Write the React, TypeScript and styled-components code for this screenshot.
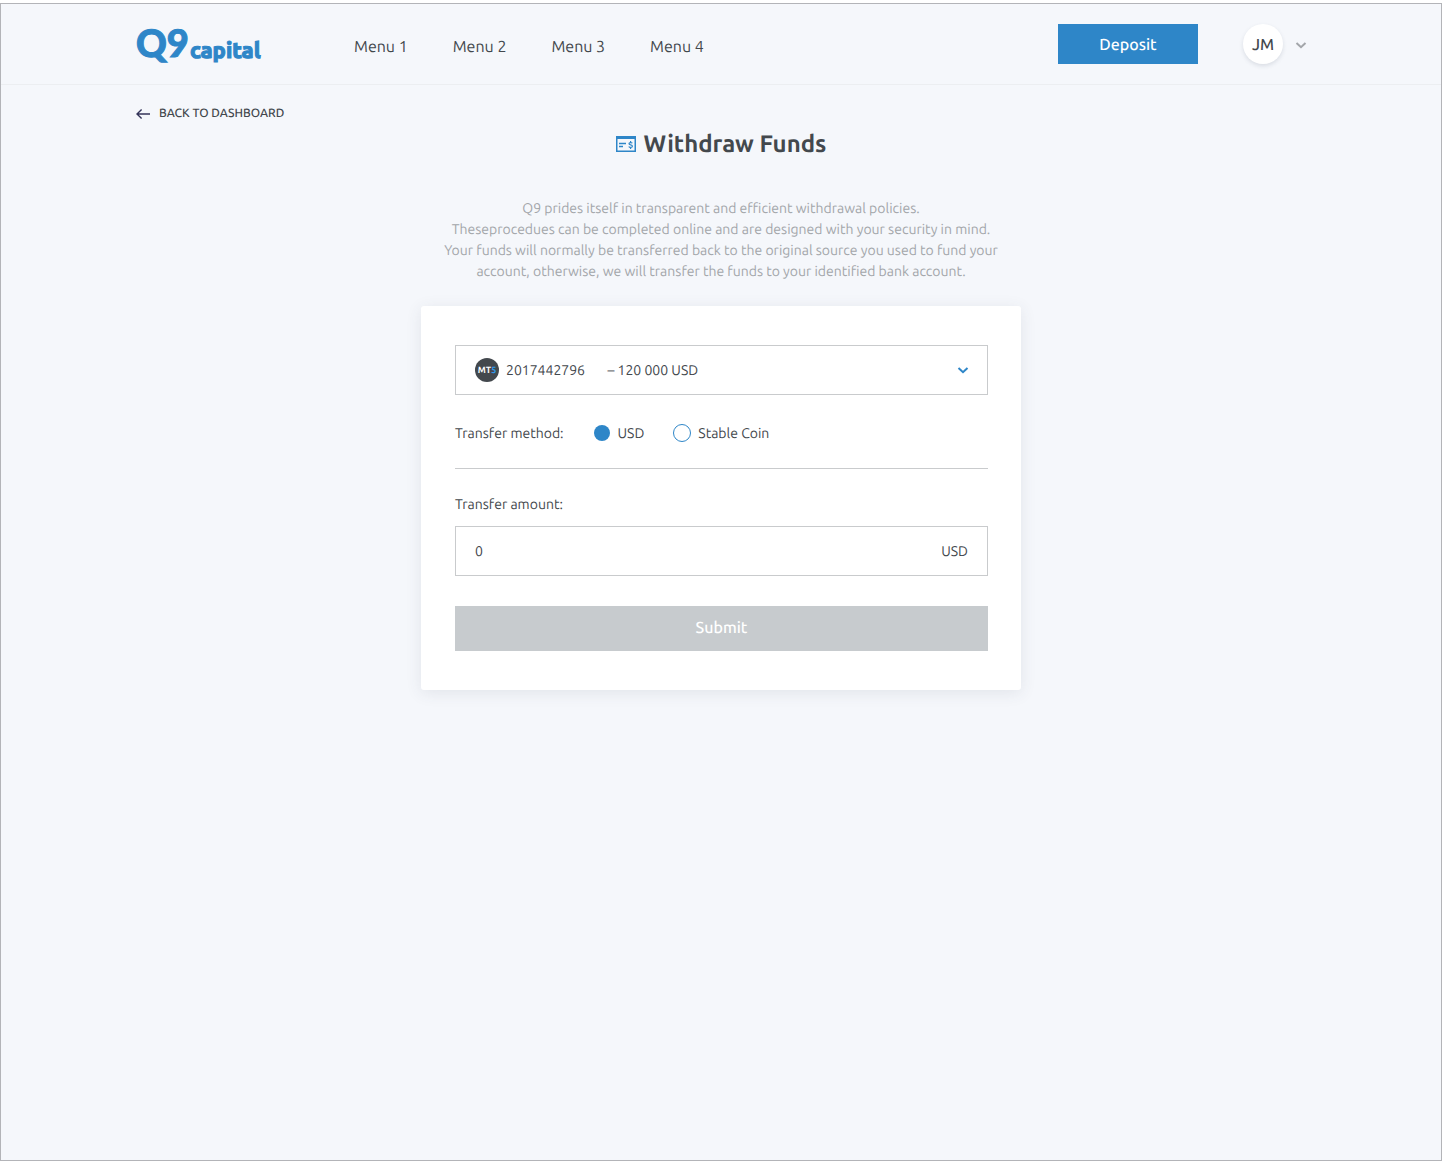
import React, { useState } from 'react';
import styled, { createGlobalStyle } from 'styled-components';

const color = {
  page: '#f5f7fb',
  ink: '#43484d',
  muted: '#a3a6aa',
  line: '#c9cbcd',
  blue: '#2e86c8',
  disabled: '#c7cbce',
};

const GlobalStyle = createGlobalStyle`
  *, *::before, *::after { box-sizing: border-box; }
  body { margin: 0; background: #fff; }
  body, button, input, select {
    font-family: Ubuntu, "Noto Sans", "Open Sans", sans-serif;
    font-size: 14px;
    color: ${color.ink};
    text-rendering: geometricPrecision;
    -webkit-font-smoothing: antialiased;
  }
  h1, p, fieldset { margin: 0; padding: 0; border: 0; }
`;

const Page = styled.div`
  min-height: calc(100vh - 3px);
  margin: 3px 3px 0 0;
  border: 1px solid #b3b4b8;
  background: ${color.page};
`;

const Container = styled.div`
  max-width: 1172px;
  margin: 0 auto;
`;

const Header = styled.header`
  border-bottom: 1px solid #eceef1;
`;

const HeaderRow = styled(Container)`
  display: flex;
  align-items: center;
  height: 80px;
`;

const Logo = styled.a`
  display: flex;
  width: 219px;
`;

const Nav = styled.nav`
  display: flex;
  gap: 45px;
  padding-top: 6px;
`;

const NavLink = styled.a`
  font-size: 16px;
  line-height: 24px;
  color: ${color.ink};
  text-decoration: none;
`;

const DepositButton = styled.button`
  width: 140px;
  height: 40px;
  margin-left: auto;
  padding: 2px 0 0;
  border: 0;
  background: ${color.blue};
  color: #fff;
  font-size: 16px;
  font-weight: 500;
`;

const AccountButton = styled.button`
  display: flex;
  align-items: center;
  gap: 12px;
  margin-left: 45px;
  padding: 0;
  border: 0;
  background: none;
  color: ${color.muted};
`;

const Avatar = styled.span`
  display: grid;
  place-items: center;
  width: 40px;
  height: 40px;
  padding-top: 2px;
  border-radius: 50%;
  background: #fff;
  box-shadow: 0 2px 4px rgba(60, 70, 90, 0.14);
  color: ${color.ink};
  font-size: 16px;
  font-weight: 500;
`;

const Main = styled.main`
  padding: 19px 0 40px;
`;

const BackLink = styled.a`
  display: inline-flex;
  align-items: center;
  gap: 9px;
  font-size: 12px;
  font-weight: 500;
  line-height: 20px;
  color: ${color.ink};
  text-decoration: none;
  text-transform: uppercase;
  vertical-align: top;
`;

const Column = styled.section`
  max-width: 600px;
  margin: 2px auto 0;
`;

const Title = styled.h1`
  display: flex;
  align-items: center;
  justify-content: center;
  gap: 8px;
  font-size: 24px;
  font-weight: 700;
  line-height: 36px;
`;

const Intro = styled.p`
  margin: 36px 0 24px;
  color: ${color.muted};
  line-height: 21px;
  text-align: center;
`;

const Card = styled.form`
  display: flex;
  flex-direction: column;
  padding: 39px 33px 39px 34px;
  border-radius: 3px;
  background: #fff;
  box-shadow: 0 3px 16px rgba(60, 70, 90, 0.1);
`;

const AccountField = styled.div`
  display: grid;
  align-items: center;

  > * { grid-area: 1 / 1; }
  > svg { pointer-events: none; }
  > svg:last-child { justify-self: end; margin-right: 19px; }
`;

const AccountSelect = styled.select`
  width: 100%;
  height: 50px;
  padding: 0 50px;
  border: 1px solid ${color.line};
  border-radius: 0;
  background: #fff;
  appearance: none;
`;

const Badge = styled.span`
  z-index: 1;
  width: 24px;
  margin-left: 20px;
  border-radius: 50%;
  background: ${color.ink};
  color: #fff;
  font-size: 9px;
  font-weight: 700;
  line-height: 24px;
  text-align: center;
  pointer-events: none;

  em { color: #2f9cf0; font-style: normal; }
`;

const Methods = styled.fieldset`
  display: flex;
  align-items: center;
  gap: 29px;
  padding: 26px 0 23px;
  border-bottom: 1px solid ${color.line};
`;

const MethodsTitle = styled.span`
  line-height: 24px;
`;

const Method = styled.label`
  display: flex;
  align-items: center;
  gap: 7px;
`;

const Radio = styled.input`
  width: 18px;
  height: 18px;
  margin: 0;
  border: 1px solid ${color.blue};
  border-radius: 50%;
  appearance: none;

  &:checked {
    border-color: transparent;
    background: ${color.blue} padding-box;
  }
`;

const AmountLabel = styled.label`
  margin: 25px 0 11px;
  line-height: 21px;
`;

const AmountField = styled.div`
  display: flex;
  align-items: center;
  height: 50px;
  padding: 0 19px;
  border: 1px solid ${color.line};
`;

const AmountInput = styled.input`
  flex: 1;
  min-width: 0;
  padding: 0;
  border: 0;
  outline: 0;
  background: none;
`;

const SubmitButton = styled.button`
  height: 45px;
  margin-top: 30px;
  padding: 0 0 1px;
  border: 0;
  background: ${color.disabled};
  color: #fff;
  font-size: 16px;
  font-weight: 500;
`;

const Chevron = () => (
  <svg width="12" height="12" viewBox="0 0 12 12" fill="none" stroke="currentColor" strokeWidth="2" aria-hidden="true">
    <path d="M1.5 5 6 9.2 10.5 5" />
  </svg>
);

const BackArrow = () => (
  <svg width="15" height="12" viewBox="0 0 15 12" fill="none" stroke="#35355a" strokeWidth="1.4" aria-hidden="true">
    <path d="M6.6 1.4 2 6 6.6 10.6M2 6H15" />
  </svg>
);

const ChequeIcon = () => (
  <svg width="20" height="16" viewBox="0 0 20 16" fill="none" stroke={color.blue} aria-hidden="true">
    <path d="M.75 1V15.25H19.25V1" strokeWidth="1.5" />
    <path d="M0 1.5H20" strokeWidth="3" />
    <path d="M3 7.5H10M3 10.5H7" strokeWidth="1.5" />
    <path d="M16.3 7.2C15.8 6.3 13 6.2 13 7.7S16.4 8.6 16.4 10.2 13.3 11.6 12.8 10.5M14.6 5V6.6M14.6 11.2V13" strokeWidth="1.2" />
  </svg>
);

const menu = ['Menu 1', 'Menu 2', 'Menu 3', 'Menu 4'];
const methods = ['USD', 'Stable Coin'];

export default function App() {
  const [method, setMethod] = useState('USD');
  const [amount, setAmount] = useState('0');

  return (
    <>
      <GlobalStyle />
      <Page>
        <Header>
          <HeaderRow>
            <Logo href="#" aria-label="Q9 capital">
              <svg width="132" height="56" viewBox="0 0 132 56" fill={color.blue} stroke={color.blue} fontWeight="900">
                <text x="1" y="41" fontSize="38" strokeWidth="1" fontFamily="Lato, sans-serif">Q9</text>
                <text x="55" y="42" fontSize="22" strokeWidth="1" fontFamily="Ubuntu, Lato, sans-serif">capital</text>
              </svg>
            </Logo>
            <Nav>
              {menu.map((item) => (
                <NavLink key={item} href="#">{item}</NavLink>
              ))}
            </Nav>
            <DepositButton type="button">Deposit</DepositButton>
            <AccountButton type="button" aria-label="Account JM">
              <Avatar>JM</Avatar>
              <Chevron />
            </AccountButton>
          </HeaderRow>
        </Header>
        <Main>
          <Container>
            <BackLink href="#">
              <BackArrow />
              Back to dashboard
            </BackLink>
            <Column>
              <Title>
                <ChequeIcon />
                Withdraw Funds
              </Title>
              <Intro>
                Q9 prides itself in transparent and efficient withdrawal policies.
                <br />
                Theseprocedues can be completed online and are designed with your security in mind.
                <br />
                Your funds will normally be transferred back to the original source you used to fund your
                <br />
                account, otherwise, we will transfer the funds to your identified bank account.
              </Intro>
              <Card onSubmit={(event) => event.preventDefault()}>
                <AccountField>
                  <AccountSelect aria-label="Account">
                    <option>{'2017442796\u00a0\u00a0\u00a0\u00a0\u00a0\u00a0\u00a0– 120 000 USD'}</option>
                  </AccountSelect>
                  <Badge aria-hidden="true">MT<em>5</em></Badge>
                  <svg width="12" height="12" viewBox="0 0 12 12" fill="none" stroke={color.blue} strokeWidth="2" aria-hidden="true">
                    <path d="M1.5 4 6 8.2 10.5 4" />
                  </svg>
                </AccountField>
                <Methods aria-label="Transfer method">
                  <MethodsTitle>Transfer method:</MethodsTitle>
                  {methods.map((name) => (
                    <Method key={name}>
                      <Radio type="radio" name="method" checked={method === name} onChange={() => setMethod(name)} />
                      {name}
                    </Method>
                  ))}
                </Methods>
                <AmountLabel htmlFor="amount">Transfer amount:</AmountLabel>
                <AmountField>
                  <AmountInput id="amount" inputMode="decimal" value={amount} onChange={(event) => setAmount(event.target.value)} />
                  <span>USD</span>
                </AmountField>
                <SubmitButton type="submit" disabled>Submit</SubmitButton>
              </Card>
            </Column>
          </Container>
        </Main>
      </Page>
    </>
  );
}
